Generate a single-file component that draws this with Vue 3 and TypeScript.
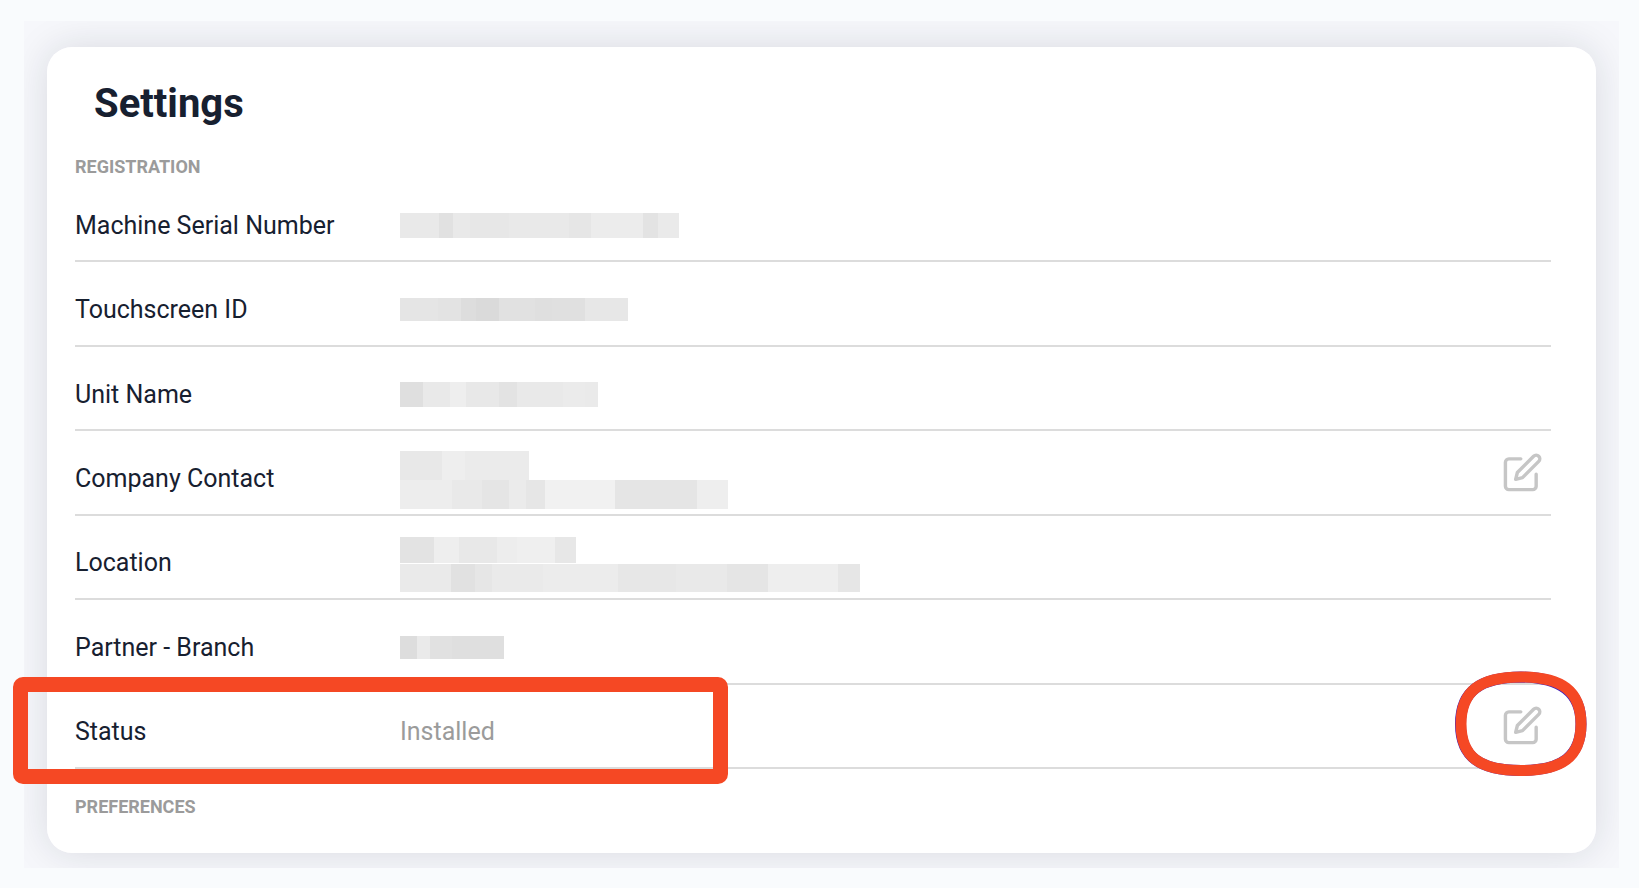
<script setup lang="ts">
interface Segment {
  width: number
  shade: string
}

interface Bar {
  height: number
  gap?: number
  segments: Segment[]
}

interface Row {
  label: string
  value?: string
  bars?: Bar[]
  editable?: boolean
  highlighted?: boolean
}

const bar = (height: number, segments: [number, string][], gap = 0): Bar => ({
  height,
  gap,
  segments: segments.map(([width, shade]) => ({ width, shade })),
})

const rows: Row[] = [
  {
    label: 'Machine Serial Number',
    bars: [
      bar(25, [[39, '#e9e9e9'], [14, '#e1e1e1'], [17, '#e9e9e9'], [39, '#e7e7e7'], [60, '#e9e9e9'], [22, '#e6e6e6'], [52, '#ececec'], [15, '#e3e3e3'], [21, '#eaeaea']]),
    ],
  },
  {
    label: 'Touchscreen ID',
    bars: [
      bar(23, [[38, '#e5e5e5'], [23, '#e3e3e3'], [15, '#dddddd'], [23, '#dadada'], [36, '#e1e1e1'], [17, '#dfdfdf'], [33, '#e0e0e0'], [43, '#e7e7e7']]),
    ],
  },
  {
    label: 'Unit Name',
    bars: [
      bar(25, [[23, '#dfdfdf'], [27, '#e9e9e9'], [16, '#eeeeee'], [33, '#e8e8e8'], [18, '#e3e3e3'], [46, '#e9e9e9'], [22, '#ebebeb'], [13, '#eaeaea']]),
    ],
  },
  {
    label: 'Company Contact',
    editable: true,
    bars: [
      bar(29, [[42, '#e8e8e8'], [23, '#eeeeee'], [64, '#ebebeb']]),
      bar(29, [[52, '#ededed'], [30, '#e9e9e9'], [27, '#e5e5e5'], [17, '#ebebeb'], [19, '#e6e6e6'], [70, '#f1f1f1'], [82, '#e5e5e5'], [31, '#eeeeee']]),
    ],
  },
  {
    label: 'Location',
    bars: [
      bar(26, [[34, '#e3e3e3'], [25, '#eeeeee'], [38, '#e8e8e8'], [20, '#ededed'], [38, '#efefef'], [21, '#e7e7e7']], 1),
      bar(28, [[51, '#eaeaea'], [24, '#e1e1e1'], [17, '#e6e6e6'], [51, '#eaeaea'], [75, '#ececec'], [58, '#e7e7e7'], [51, '#e9e9e9'], [41, '#e5e5e5'], [70, '#eeeeee'], [22, '#e6e6e6']]),
    ],
  },
  {
    label: 'Partner - Branch',
    bars: [bar(23, [[17, '#dddddd'], [13, '#eaeaea'], [22, '#e1e1e1'], [52, '#dfdfdf']])],
  },
  { label: 'Status', value: 'Installed', editable: true, highlighted: true },
]
</script>

<template>
  <main class="frame">
    <div class="shade" aria-hidden="true"><div class="shade-box"></div></div>
    <section class="card">
      <h1 class="title">Settings</h1>
      <h2 class="section">Registration</h2>
      <dl class="rows">
        <div v-for="row in rows" :key="row.label" class="row">
          <dt class="label">{{ row.label }}</dt>
          <dd class="value" :class="{ stacked: row.bars && row.bars.length > 1 }">
            <template v-if="row.value">{{ row.value }}</template>
            <div
              v-for="(item, i) in row.bars"
              :key="i"
              class="bar"
              :style="{ height: item.height + 'px', marginBottom: item.gap + 'px' }"
            >
              <span
                v-for="(segment, j) in item.segments"
                :key="j"
                :style="{ width: segment.width + 'px', background: segment.shade }"
              ></span>
            </div>
          </dd>
          <dd v-if="row.editable" class="action">
            <button type="button" class="edit" :aria-label="'Edit ' + row.label">
              <svg viewBox="0 0 24 24" width="41" height="41">
                <path d="M11 4H4a2 2 0 0 0-2 2v14a2 2 0 0 0 2 2h14a2 2 0 0 0 2-2v-7" />
                <path d="M18.5 2.5a2.121 2.121 0 0 1 3 3L12 15l-4 1 1-4 9.5-9.5z" />
              </svg>
            </button>
            <svg v-if="row.highlighted" class="ring" viewBox="0 0 134 106" width="134" height="106" aria-hidden="true">
              <path class="ring-edge" d="M67 6C106 6.500 127 21 127 53S108 99.500 67 99.500 6.500 86 6.500 53 26 6.500 67 6Z" />
              <path class="ring-line" d="M67 6C108 6 127 20 127 53S108 99.500 67 99.500 7 86 7 53 26 6 67 6Z" />
            </svg>
          </dd>
          <dd v-if="row.highlighted" class="outline" aria-hidden="true"></dd>
        </div>
      </dl>
      <h2 class="section">Preferences</h2>
    </section>
  </main>
</template>

<style>
body {
  margin: 0;
  background: #f9fbfd;
}
</style>

<style scoped>
.frame {
  display: grid;
  margin: 21px 20px 20px 24px;
  font-family: Roboto, "Liberation Sans", sans-serif;
  color: #172030;
}

.shade,
.card {
  grid-area: 1 / 1;
}

.shade {
  display: grid;
  overflow: hidden;
  padding: 26px 23px 15px;
  background: #f6f7fb;
}

.shade-box {
  border-radius: 25px;
  box-shadow: 0 0 38px rgba(24, 32, 48, 0.13);
}

.card {
  margin: 26px 23px 15px;
  padding: 33px 45px 35px 28px;
  border-radius: 25px;
  background: #fff;
}

.title {
  margin: 0 0 28px 19px;
  font-size: 40px;
  line-height: 48px;
  font-weight: 700;
}

.section {
  margin: 0;
  font-size: 18px;
  line-height: 22px;
  font-weight: 700;
  text-transform: uppercase;
  color: #9b9b9b;
}

.rows {
  display: grid;
  grid-auto-rows: 1fr;
  min-height: 591px;
  margin: 0 0 27px;
}

.row {
  position: relative;
  display: grid;
  grid-template-columns: 325px 1fr auto;
  align-items: center;
  border-bottom: 2px solid #dcdcdc;
  font-size: 25px;
  line-height: 32px;
}

.label,
.value {
  margin: 0;
  padding-top: 12px;
}

.label {
  padding-top: 13px;
}

.value {
  color: #9b9b9b;
}

.stacked {
  padding-top: 16px;
}

.bar {
  display: flex;
}

.action {
  position: relative;
  display: flex;
  margin: 0 8px 0 0;
}

.edit {
  display: flex;
  padding: 0;
  border: 0;
  background: none;
  cursor: pointer;
}

.edit path {
  fill: none;
  stroke: #c6c6c6;
  stroke-width: 2;
  stroke-linecap: round;
  stroke-linejoin: round;
}

.ring {
  position: absolute;
  top: -34px;
  left: -48px;
  pointer-events: none;
}

.ring path {
  fill: none;
  stroke-width: 11;
}

.ring .ring-edge {
  stroke: #3a1fc0;
}

.ring .ring-line {
  stroke: #f54824;
}

.outline {
  position: absolute;
  top: -8px;
  left: -62px;
  box-sizing: border-box;
  width: 715px;
  height: 107px;
  margin: 0;
  border: 15px solid #f54824;
  border-radius: 10px;
  pointer-events: none;
}
</style>
